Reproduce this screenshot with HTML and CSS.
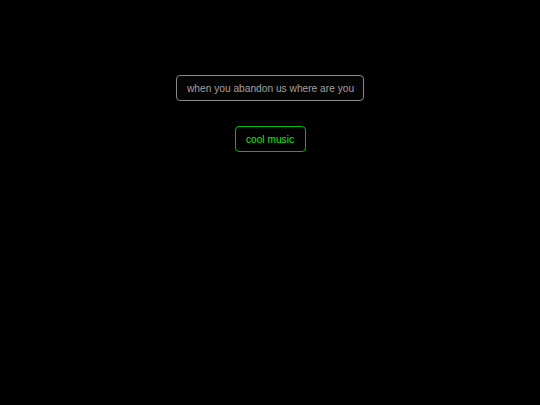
FILE: index.html
```html
<!DOCTYPE html>
<html>
<head>
<meta charset="utf-8">
<link rel="stylesheet" href="styles.css">
</head>
<body>
<div class="page">
  <input class="query" type="text" placeholder="when you abandon us where are you">
  <button class="cool">cool music</button>
</div>
</body>
</html>
```
FILE: styles.css
```css
html, body {
  margin: 0;
  padding: 0;
  background: #000;
  height: 100%;
}
.page {
  display: flex;
  flex-direction: column;
  align-items: center;
  padding-top: 75px;
  gap: 25px;
  font-family: "Liberation Sans", Arial, sans-serif;
}
.query {
  box-sizing: border-box;
  width: 188px;
  height: 26px;
  padding: 0 6px 0 10px;
  background: #050505;
  border: 1px solid #888;
  border-radius: 4px;
  color: #999;
  font-family: "Liberation Sans", Arial, sans-serif;
  font-size: 10.2px;
  outline: none;
}
.query::placeholder {
  color: #a0a0a0;
  opacity: 1;
  font-family: "Liberation Sans", Arial, sans-serif;
}
.cool {
  box-sizing: border-box;
  width: 71px;
  height: 26px;
  padding: 0;
  background: #000;
  border: 1px solid #0b0;
  border-radius: 4px;
  color: #1e1;
  font-family: "Liberation Sans", Arial, sans-serif;
  font-size: 10.2px;
}
```
